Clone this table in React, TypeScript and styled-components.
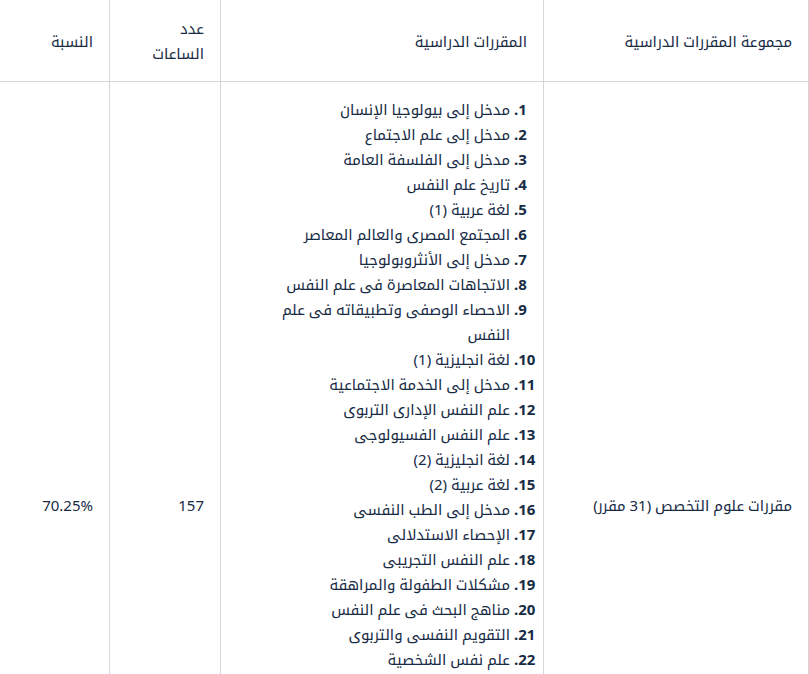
import React from "react";
import styled, { createGlobalStyle } from "styled-components";

const GlobalStyle = createGlobalStyle`
  html, body {
    margin: 0;
    padding: 0;
    background: #ffffff;
  }
  body {
    font-family: "Noto Sans", "Noto Kufi Arabic", "Droid Arabic Kufi", "Noto Sans Arabic", "DejaVu Sans", sans-serif;
    color: #172b45;
  }
`;

const Page = styled.div`
  direction: rtl;
  width: 809px;
  overflow: hidden;
`;

const Table = styled.table`
  width: 809px;
  table-layout: fixed;
  border-collapse: separate;
  border-spacing: 0;
  font-size: 15px;
  line-height: 25px;
`;

const HeadCell = styled.th<{ $w: number }>`
  box-sizing: border-box;
  width: ${(p) => p.$w}px;
  padding: 16px 16px 15px;
  text-align: right;
  font-weight: 400;
  vertical-align: middle;
  border-right: 1px solid #d6d6d9;
  border-bottom: 1px solid #d6d6d9;
`;

const Cell = styled.td`
  box-sizing: border-box;
  padding: 15px 16px;
  text-align: right;
  vertical-align: middle;
  border-right: 1px solid #d6d6d9;
`;

const CourseList = styled.ol`
  margin: 0 0 16px;
  padding: 0 17px 0 0;
  list-style: decimal outside;
`;

const CourseItem = styled.li`
  &::marker {
    font-weight: 700;
  }
`;

const courses = [
  "مدخل إلى بيولوجيا الإنسان",
  "مدخل إلى علم الاجتماع",
  "مدخل إلى الفلسفة العامة",
  "تاريخ علم النفس",
  "لغة عربية (1)",
  "المجتمع المصرى والعالم المعاصر",
  "مدخل إلى الأنثروبولوجيا",
  "الاتجاهات المعاصرة فى علم النفس",
  "الاحصاء الوصفى وتطبيقاته فى علم النفس",
  "لغة انجليزية (1)",
  "مدخل إلى الخدمة الاجتماعية",
  "علم النفس الإدارى التربوى",
  "علم النفس الفسيولوجى",
  "لغة انجليزية (2)",
  "لغة عربية (2)",
  "مدخل إلى الطب النفسى",
  "الإحصاء الاستدلالى",
  "علم النفس التجريبى",
  "مشكلات الطفولة والمراهقة",
  "مناهج البحث فى علم النفس",
  "التقويم النفسى والتربوى",
  "علم نفس الشخصية",
  "علم النفس الاجتماعى",
  "علم النفس المعرفى",
  "القياس النفسى",
  "علم النفس الإكلينيكى",
  "الصحة النفسية",
  "علم النفس المرضى",
  "الإرشاد والعلاج النفسى",
  "علم النفس الصناعى",
  "مشروع التخرج",
];

export default function App() {
  return (
    <Page>
      <GlobalStyle />
      <Table>
        <thead>
          <tr>
            <HeadCell $w={265}>مجموعة المقررات الدراسية</HeadCell>
            <HeadCell $w={323}>المقررات الدراسية</HeadCell>
            <HeadCell $w={111}>عدد الساعات</HeadCell>
            <HeadCell $w={110}>النسبة</HeadCell>
          </tr>
        </thead>
        <tbody>
          <tr>
            <Cell>مقررات علوم التخصص (31 مقرر)</Cell>
            <Cell>
              <CourseList>
                {courses.map((c) => (
                  <CourseItem key={c}>{c}</CourseItem>
                ))}
              </CourseList>
            </Cell>
            <Cell>157</Cell>
            <Cell>70.25%</Cell>
          </tr>
        </tbody>
      </Table>
    </Page>
  );
}
